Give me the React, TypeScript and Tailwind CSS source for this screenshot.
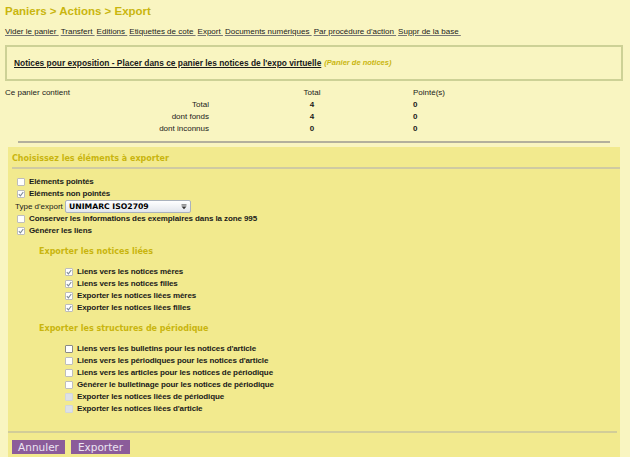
import React from "react";

const GOLD = "text-[#c9b50f]";

function Box({ checked = false, disabled = false, focus = false }: { checked?: boolean; disabled?: boolean; focus?: boolean }) {
  return (
    <span
      className={
        "inline-flex items-center justify-center w-[8px] h-[8px] rounded-[1px] border shrink-0 " +
        (disabled
          ? "bg-[#dde1e7] border-[#d2d6dc]"
          : focus
          ? "bg-white border-[#8a8a86]"
          : "bg-white border-[#bdbdbd]")
      }
    >
      {checked && (
        <svg width="6" height="6" viewBox="0 0 6 6">
          <path d="M0.8 3.2 L2.4 4.8 L5.3 1" fill="none" stroke="#7d8a98" strokeWidth="1.1" />
        </svg>
      )}
    </span>
  );
}

function Item({ label, checked, disabled, focus }: { label: string; checked?: boolean; disabled?: boolean; focus?: boolean }) {
  return (
    <div className="flex items-center h-[12px] gap-[4px]">
      <Box checked={checked} disabled={disabled} focus={focus} />
      <span className="font-bold text-[8px] tracking-[-0.1px] leading-[12px] text-[#1a1a1a]">{label}</span>
    </div>
  );
}

export default function App() {
  const nav = [
    "Vider le panier",
    "Transfert",
    "Editions",
    "Etiquettes de cote",
    "Export",
    "Documents numériques",
    "Par procédure d'action",
    "Suppr de la base",
  ];
  const rows = [
    ["Total", "4", "0"],
    ["dont fonds", "4", "0"],
    ["dont inconnus", "0", "0"],
  ];
  return (
    <div className="w-[630px] h-[457px] overflow-hidden bg-[#f9f5c1] text-[#1a1a1a] font-['Liberation_Sans',Arial,sans-serif]">
      {/* Title */}
      <div className={"h-[22px] pt-[4px] pl-[5px] font-bold text-[11.5px] leading-[14px] " + GOLD}>
        Paniers &gt; Actions &gt; Export
      </div>
      {/* Nav */}
      <div className="h-[16px] pt-[4px] pl-[5px] flex text-[8px] leading-[12px]">
        {nav.map((n) => (
          <a key={n} className="underline decoration-[#777] mr-[2px] whitespace-pre">
            {n + " "}
          </a>
        ))}
      </div>
      {/* Basket box */}
      <div className="mt-[7px] ml-[5px] w-[618px] h-[36px] border-2 border-[#cdd196] flex items-center pl-[7px]">
        <span className="font-bold text-[8.4px] underline">
          Notices pour exposition - Placer dans ce panier les notices de l'expo virtuelle
        </span>
        <span className={"ml-[3px] italic font-bold text-[7.5px] " + GOLD}>(Panier de notices)</span>
      </div>
      {/* Table */}
      <div className="mt-[6px] pl-[5px] text-[8px] leading-[12px]">
        <div className="flex h-[12px]">
          <div className="w-[204px]">Ce panier contient</div>
          <div className="ml-[83px] w-[40px] text-center">Total</div>
          <div className="ml-[81px]">Pointé(s)</div>
        </div>
        {rows.map((r) => (
          <div key={r[0]} className="flex h-[12px]">
            <div className="w-[204px] text-right">{r[0]}</div>
            <div className="ml-[83px] w-[40px] text-center font-bold">{r[1]}</div>
            <div className="ml-[81px] font-bold">{r[2]}</div>
          </div>
        ))}
      </div>
      <div className="mt-[6px] ml-[18px] w-[592px] h-[2px] bg-[#b3b09d]" />
      {/* Panel */}
      <div className="mt-[4px] ml-[8px] w-[612px] h-[320px] bg-[#f2ea8e] font-['Liberation_Sans',Arial,sans-serif]">
        <div className={"pt-[6px] pl-[4px] font-['DejaVu_Sans',sans-serif] font-bold text-[8px] leading-[12px] " + GOLD}>
          Choisissez les éléments à exporter
        </div>
        <div className="mt-[2px] ml-[4px] h-[2px] bg-[#cfcaa2]" />
        <div className="mt-[7px] pl-[9px] flex flex-col">
          <Item label="Eléments pointés" />
          <Item label="Eléments non pointés" checked />
          <div className="flex items-center h-[13px] -ml-[2px]">
            <span className="text-[8px] leading-[12px] w-[50px]">Type d'export</span>
            <div className="w-[126px] h-[13px] rounded-[2px] border border-[#aab2be] bg-gradient-to-b from-[#ffffff] to-[#e2e6ec] flex items-center pl-[3px] pr-[3px]">
              <span className="font-['DejaVu_Sans',sans-serif] font-bold text-[7.7px] text-black flex-1">UNIMARC ISO2709</span>
              <svg width="6" height="6" viewBox="0 0 6 6">
                <rect x="0.5" y="0.5" width="5" height="0.9" fill="#333" />
                <path d="M0.5 2.5 L5.5 2.5 L3 5.3 Z" fill="#333" />
              </svg>
            </div>
          </div>
          <Item label="Conserver les informations des exemplaires dans la zone 995" />
          <Item label="Générer les liens" checked />
        </div>
        <div className={"mt-[9px] pl-[31px] font-['DejaVu_Sans',sans-serif] font-bold text-[8px] leading-[12px] " + GOLD}>
          Exporter les notices liées
        </div>
        <div className="mt-[8px] pl-[57px] flex flex-col">
          <Item label="Liens vers les notices mères" checked />
          <Item label="Liens vers les notices filles" checked />
          <Item label="Exporter les notices liées mères" checked />
          <Item label="Exporter les notices liées filles" checked />
        </div>
        <div className={"mt-[9px] pl-[31px] font-['DejaVu_Sans',sans-serif] font-bold text-[8px] leading-[12px] " + GOLD}>
          Exporter les structures de périodique
        </div>
        <div className="mt-[8px] pl-[57px] flex flex-col">
          <Item label="Liens vers les bulletins pour les notices d'article" focus />
          <Item label="Liens vers les périodiques pour les notices d'article" />
          <Item label="Liens vers les articles pour les notices de périodique" />
          <Item label="Générer le bulletinage pour les notices de périodique" />
          <Item label="Exporter les notices liées de périodique" disabled />
          <Item label="Exporter les notices liées d'article" disabled />
        </div>
        <div className="mt-[16px] w-[609px] h-[2px] bg-[#d2cd98]" />
        <div className="mt-[7px] pl-[4px] flex gap-[6px]">
          <button className="w-[53px] h-[14px] bg-[#8b5c9a] text-[#ece4f2] font-['DejaVu_Sans',sans-serif] text-[10.5px] leading-[14px] flex items-center justify-center">
            Annuler
          </button>
          <button className="w-[59px] h-[14px] bg-[#8b5c9a] text-[#ece4f2] font-['DejaVu_Sans',sans-serif] text-[10.5px] leading-[14px] flex items-center justify-center">
            Exporter
          </button>
        </div>
      </div>
    </div>
  );
}
